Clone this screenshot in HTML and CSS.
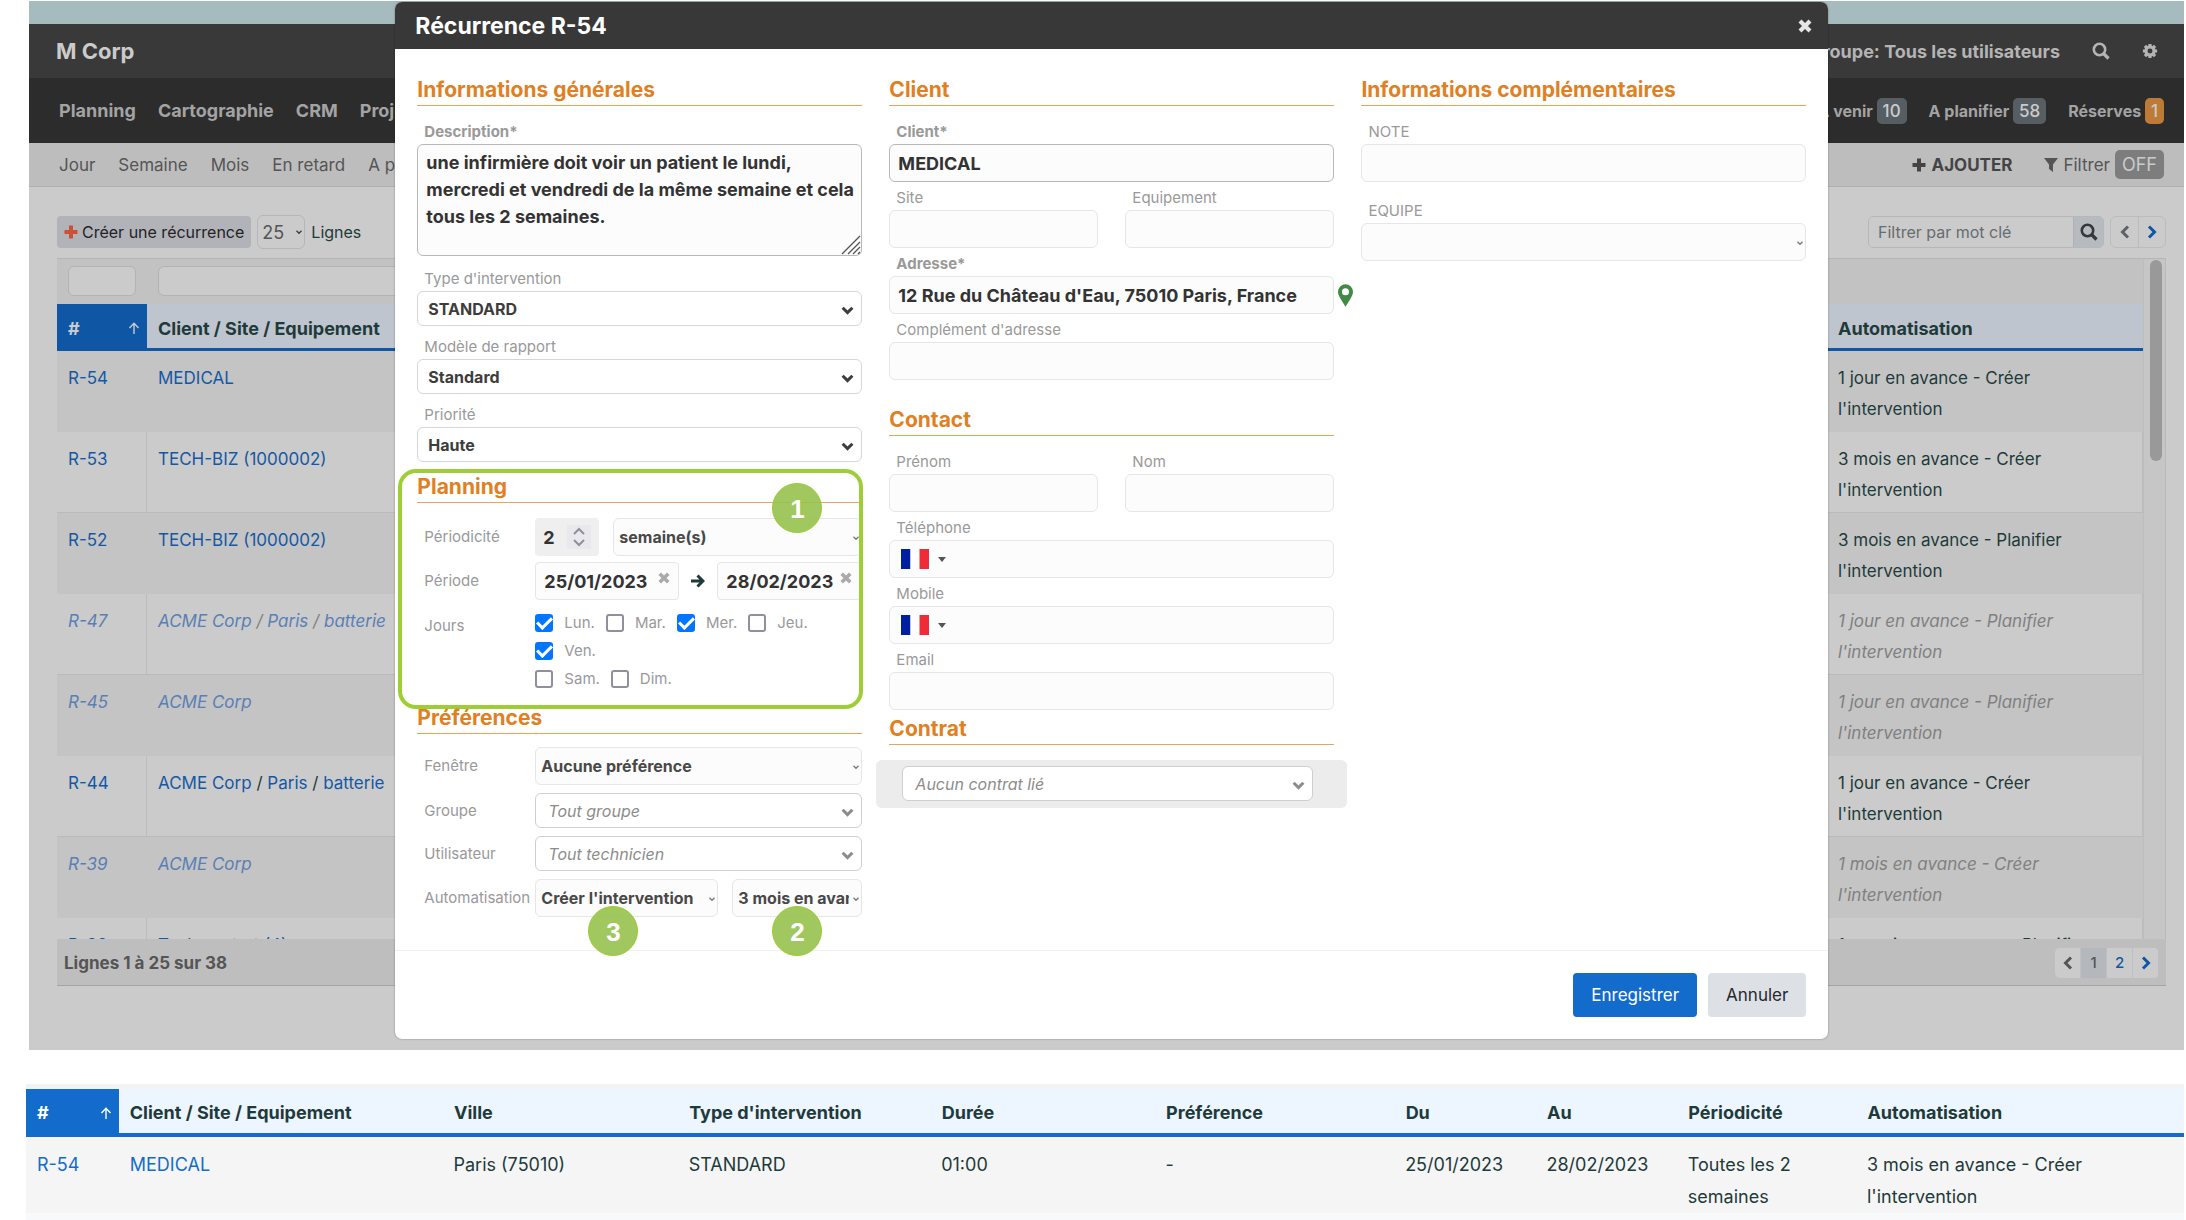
FILE: index.html
```
<!DOCTYPE html>
<html lang="fr">
<head>
    <meta charset="UTF-8">
    <meta name="viewport" content="width=device-width, initial-scale=1.0">
    <title>Récurrence R-54 - M Corp</title>
    <link rel="stylesheet" href="styles.css">
</head>
<body>
    <!-- Icônes communes -->
    <svg class="sprite" aria-hidden="true">
        <symbol id="chevron" viewBox="0 0 12 12"><path d="M1.5 3.5L6 8l4.500-4.500" fill="none" stroke="currentColor" stroke-width="2.800"/></symbol>
        <symbol id="chevron-small" viewBox="0 0 12 12"><path d="M3 4.500L6 7.500l3-3" fill="none" stroke="currentColor" stroke-width="1.600"/></symbol>
        <symbol id="left" viewBox="0 0 14 14"><path d="M10 1.500L4.500 7l5.500 5.500" fill="none" stroke="currentColor" stroke-width="3"/></symbol>
        <symbol id="right" viewBox="0 0 14 14"><path d="M4 1.500L9.500 7 4 12.500" fill="none" stroke="currentColor" stroke-width="3"/></symbol>
        <symbol id="cross" viewBox="0 0 14 14"><path d="M2 2l10 10M12 2L2 12" fill="none" stroke="currentColor" stroke-width="4.200"/></symbol>
        <symbol id="plus" viewBox="0 0 14 14"><path d="M7 .5v13M.5 7h13" fill="none" stroke="currentColor" stroke-width="4"/></symbol>
        <symbol id="search" viewBox="0 0 18 18"><circle cx="7.500" cy="7.500" r="5.700" fill="none" stroke="currentColor" stroke-width="2.600"/><path d="M11.500 11.500l5 5" stroke="currentColor" stroke-width="3.200"/></symbol>
        <symbol id="gear" viewBox="0 0 18 18"><circle cx="9" cy="9" r="4.600" fill="none" stroke="currentColor" stroke-width="3.600"/><path d="M9 1v3M9 14v3M1 9h3M14 9h3M3.300 3.300l2.200 2.200M12.500 12.500l2.200 2.200M14.700 3.300l-2.200 2.200M5.500 12.500l-2.200 2.200" stroke="currentColor" stroke-width="3.600"/></symbol>
        <symbol id="filter" viewBox="0 0 14 14"><path d="M0 0h14L9 6.500V14l-4-3V6.500z" fill="currentColor"/></symbol>
        <symbol id="up" viewBox="0 0 12 12"><path d="M6 12V1.500M1.500 6L6 1.300 10.500 6" fill="none" stroke="currentColor" stroke-width="1.400"/></symbol>
        <symbol id="arrow" viewBox="0 0 14 14"><path d="M0 7h11M6.500 1.500L12 7l-5.500 5.500" fill="none" stroke="currentColor" stroke-width="3"/></symbol>
        <symbol id="pin" viewBox="0 0 16 24"><path d="M8 0a8 8 0 0 0-8 8c0 3 1.500 5 3 8l5 8 5-8c1.500-3 3-5 3-8a8 8 0 0 0-8-8zm0 4.200a3.800 3.800 0 1 1 0 7.600 3.800 3.800 0 0 1 0-7.600z" fill="currentColor" fill-rule="evenodd"/></symbol>
        <symbol id="flag" viewBox="0 0 28 20"><path d="M0 0h9.500v20H0z" fill="#00209f"/><path d="M9.500 0h9v20h-9z" fill="#fff"/><path d="M18.500 0H28v20h-9.500z" fill="#ef2b36"/></symbol>
    </svg>

    <div class="app">
        <div class="strip"></div>
        <header class="topbar">
            <strong class="brand">M Corp</strong>
            <div class="topbar-right">
                <strong>Groupe: Tous les utilisateurs</strong>
                <button type="button" aria-label="Rechercher"><svg class="icon-18"><use href="#search"/></svg></button>
                <button type="button" aria-label="Paramètres"><svg class="icon-16"><use href="#gear"/></svg></button>
            </div>
        </header>
        <nav class="mainnav">
            <div class="links">
                <a href="#">Planning</a>
                <a href="#">Cartographie</a>
                <a href="#">CRM</a>
                <a href="#">Projets</a>
            </div>
            <div class="links counters">
                <a href="#">A venir <span class="count">10</span></a>
                <a href="#">A planifier <span class="count">58</span></a>
                <a href="#">Réserves <span class="count count-orange">1</span></a>
            </div>
        </nav>
        <nav class="subnav">
            <div class="links">
                <a href="#">Jour</a>
                <a href="#">Semaine</a>
                <a href="#">Mois</a>
                <a href="#">En retard</a>
                <a href="#">A planifier</a>
            </div>
            <div class="subnav-right">
                <button type="button" class="add"><svg class="icon-14"><use href="#plus"/></svg>AJOUTER</button>
                <button type="button" class="filter"><svg class="icon-14"><use href="#filter"/></svg>Filtrer <span class="off">OFF</span></button>
            </div>
        </nav>

        <main class="content">
            <div class="toolbar">
                <button type="button" class="create"><svg class="icon-14"><use href="#plus"/></svg>Créer une récurrence</button>
                <span class="select lines-select">
                    <select id="lines"><option>25</option></select>
                    <svg><use href="#chevron-small"/></svg>
                </span>
                <label class="lines-label" for="lines">Lignes</label>
                <div class="search">
                    <input type="text" placeholder="Filtrer par mot clé" aria-label="Filtrer par mot clé">
                    <button type="button" aria-label="Filtrer"><svg class="icon-18"><use href="#search"/></svg></button>
                </div>
                <div class="pager">
                    <button type="button" aria-label="Précédent"><svg class="icon-14"><use href="#left"/></svg></button>
                    <button type="button" class="blue" aria-label="Suivant"><svg class="icon-14"><use href="#right"/></svg></button>
                </div>
            </div>

            <div class="grid-box">
                <table class="grid">
                    <colgroup><col class="g-num"><col class="g-client"><col><col class="g-auto"></colgroup>
                    <thead>
                        <tr class="filters">
                            <td><input type="text" aria-label="Filtrer par numéro"></td>
                            <td colspan="2"><input type="text" aria-label="Filtrer par client"></td>
                            <td></td>
                        </tr>
                        <tr>
                            <th class="sorted"><span class="sort"># <svg class="icon-12"><use href="#up"/></svg></span></th>
                            <th>Client / Site / Equipement</th>
                            <th></th>
                            <th>Automatisation</th>
                        </tr>
                    </thead>
                    <tbody>
                        <tr><td><a href="#">R-54</a></td><td><a href="#">MEDICAL</a></td><td></td><td>1 jour en avance - Créer<br>l'intervention</td></tr>
                        <tr><td><a href="#">R-53</a></td><td><a href="#">TECH-BIZ (1000002)</a></td><td></td><td>3 mois en avance - Créer<br>l'intervention</td></tr>
                        <tr><td><a href="#">R-52</a></td><td><a href="#">TECH-BIZ (1000002)</a></td><td></td><td>3 mois en avance - Planifier<br>l'intervention</td></tr>
                        <tr class="inactive"><td><a href="#">R-47</a></td><td><a href="#">ACME Corp</a> / <a href="#">Paris</a> / <a href="#">batterie</a></td><td></td><td>1 jour en avance - Planifier<br>l'intervention</td></tr>
                        <tr class="inactive"><td><a href="#">R-45</a></td><td><a href="#">ACME Corp</a></td><td></td><td>1 jour en avance - Planifier<br>l'intervention</td></tr>
                        <tr><td><a href="#">R-44</a></td><td><a href="#">ACME Corp</a> / <a href="#">Paris</a> / <a href="#">batterie</a></td><td></td><td>1 jour en avance - Créer<br>l'intervention</td></tr>
                        <tr class="inactive"><td><a href="#">R-39</a></td><td><a href="#">ACME Corp</a></td><td></td><td>1 mois en avance - Créer<br>l'intervention</td></tr>
                        <tr><td><a href="#">R-38</a></td><td><a href="#">Tech contrat (4)</a></td><td></td><td>1 semaine en avance - Planifier<br>l'intervention</td></tr>
                    </tbody>
                </table>
                <div class="track"><div class="thumb"></div></div>
            </div>
            <div class="grid-footer">
                <strong>Lignes 1 à 25 sur 38</strong>
                <div class="pages">
                    <button type="button" aria-label="Page précédente"><svg class="icon-14"><use href="#left"/></svg></button>
                    <button type="button" class="current">1</button>
                    <button type="button" class="blue">2</button>
                    <button type="button" class="blue" aria-label="Page suivante"><svg class="icon-14"><use href="#right"/></svg></button>
                </div>
            </div>
        </main>

        <!-- Fenêtre de la récurrence -->
        <form class="modal" role="dialog" aria-labelledby="modal-title">
            <div class="modal-header">
                <h1 id="modal-title">Récurrence R-54</h1>
                <button type="button" aria-label="Fermer"><svg class="icon-14"><use href="#cross"/></svg></button>
            </div>
            <div class="modal-body">
                <div class="column">
                    <h2>Informations générales</h2>
                    <div class="field">
                        <label class="required" for="description">Description*</label>
                        <div class="area">
                            <textarea id="description">une infirmière doit voir un patient le lundi, mercredi et vendredi de la même semaine et cela tous les 2 semaines.</textarea>
                            <svg class="grip" viewBox="0 0 20 20" aria-hidden="true"><path d="M1 19L19 1M7 19L19 7M12 19l7-7M17 19l2-2" stroke="#555" stroke-width="1.300"/></svg>
                        </div>
                    </div>
                    <div class="field field-select">
                        <label for="type">Type d'intervention</label>
                        <span class="select"><select id="type"><option>STANDARD</option></select><svg><use href="#chevron"/></svg></span>
                    </div>
                    <div class="field field-select">
                        <label for="report">Modèle de rapport</label>
                        <span class="select"><select id="report"><option>Standard</option></select><svg><use href="#chevron"/></svg></span>
                    </div>
                    <div class="field field-select">
                        <label for="priority">Priorité</label>
                        <span class="select"><select id="priority"><option>Haute</option></select><svg><use href="#chevron"/></svg></span>
                    </div>

                    <section class="planning">
                        <h2>Planning</h2>
                        <div class="row">
                            <label for="period">Périodicité</label>
                            <div class="controls">
                                <span class="number">
                                    <input type="text" inputmode="numeric" id="period" value="2">
                                    <span class="spin"><svg viewBox="0 0 24 24" aria-hidden="true"><path d="M7 9l5-5 5 5M7 15l5 5 5-5" fill="none" stroke="#8f8f9d" stroke-width="2"/></svg></span>
                                </span>
                                <span class="select soft grow"><select aria-label="Unité de périodicité"><option>semaine(s)</option></select><svg><use href="#chevron-small"/></svg></span>
                            </div>
                        </div>
                        <div class="row">
                            <label for="start">Période</label>
                            <div class="controls dates">
                                <span class="date"><input type="text" id="start" value="25/01/2023"><button type="button" aria-label="Effacer le début"><svg class="icon-12"><use href="#cross"/></svg></button></span>
                                <svg class="icon-14 to"><use href="#arrow"/></svg>
                                <span class="date"><input type="text" aria-label="Fin" value="28/02/2023"><button type="button" aria-label="Effacer la fin"><svg class="icon-12"><use href="#cross"/></svg></button></span>
                            </div>
                        </div>
                        <div class="row days">
                            <span class="row-title">Jours</span>
                            <div>
                                <div class="checks">
                                    <label><input type="checkbox" checked>Lun.</label>
                                    <label><input type="checkbox">Mar.</label>
                                    <label><input type="checkbox" checked>Mer.</label>
                                    <label><input type="checkbox">Jeu.</label>
                                    <label><input type="checkbox" checked>Ven.</label>
                                </div>
                                <div class="checks">
                                    <label><input type="checkbox">Sam.</label>
                                    <label><input type="checkbox">Dim.</label>
                                </div>
                            </div>
                        </div>
                        <div class="highlight"></div>
                        <span class="step step-1">1</span>
                    </section>

                    <section class="prefs">
                        <h2>Préférences</h2>
                        <div class="row">
                            <label for="window">Fenêtre</label>
                            <span class="select soft"><select id="window"><option>Aucune préférence</option></select><svg><use href="#chevron-small"/></svg></span>
                        </div>
                        <div class="row">
                            <label for="group">Groupe</label>
                            <span class="select empty"><select id="group"><option>Tout groupe</option></select><svg><use href="#chevron"/></svg></span>
                        </div>
                        <div class="row">
                            <label for="user">Utilisateur</label>
                            <span class="select empty"><select id="user"><option>Tout technicien</option></select><svg><use href="#chevron"/></svg></span>
                        </div>
                        <div class="row">
                            <label for="auto">Automatisation</label>
                            <div class="controls auto">
                                <span class="select soft"><select id="auto"><option>Créer l'intervention</option></select><svg><use href="#chevron-small"/></svg></span>
                                <span class="select soft"><select aria-label="Délai"><option>3 mois en avance</option></select><svg><use href="#chevron-small"/></svg></span>
                            </div>
                        </div>
                        <span class="step step-2">2</span>
                        <span class="step step-3">3</span>
                    </section>
                </div>

                <div class="column">
                    <h2>Client</h2>
                    <div class="field">
                        <label class="required" for="client">Client*</label>
                        <input type="text" class="strong" id="client" value="MEDICAL">
                    </div>
                    <div class="pair">
                        <div class="field">
                            <label for="site">Site</label>
                            <input type="text" id="site">
                        </div>
                        <div class="field">
                            <label for="equipment">Equipement</label>
                            <input type="text" id="equipment">
                        </div>
                    </div>
                    <div class="field address">
                        <label class="required" for="address">Adresse*</label>
                        <input type="text" id="address" value="12 Rue du Château d'Eau, 75010 Paris, France">
                        <svg class="pin"><use href="#pin"/></svg>
                    </div>
                    <div class="field">
                        <label for="address2">Complément d'adresse</label>
                        <input type="text" id="address2">
                    </div>

                    <section class="contact">
                        <h2>Contact</h2>
                        <div class="pair">
                            <div class="field">
                                <label for="firstname">Prénom</label>
                                <input type="text" id="firstname">
                            </div>
                            <div class="field">
                                <label for="lastname">Nom</label>
                                <input type="text" id="lastname">
                            </div>
                        </div>
                        <div class="field">
                            <label for="phone">Téléphone</label>
                            <div class="phone"><svg class="flag"><use href="#flag"/></svg><i></i><input type="tel" id="phone"></div>
                        </div>
                        <div class="field">
                            <label for="mobile">Mobile</label>
                            <div class="phone"><svg class="flag"><use href="#flag"/></svg><i></i><input type="tel" id="mobile"></div>
                        </div>
                        <div class="field">
                            <label for="email">Email</label>
                            <input type="email" id="email">
                        </div>
                    </section>

                    <section class="contract">
                        <h2>Contrat</h2>
                        <div class="contract-box">
                            <span class="select empty"><select aria-label="Contrat"><option>Aucun contrat lié</option></select><svg><use href="#chevron"/></svg></span>
                        </div>
                    </section>
                </div>

                <div class="column extra">
                    <h2>Informations complémentaires</h2>
                    <div class="field">
                        <label for="note">NOTE</label>
                        <input type="text" id="note">
                    </div>
                    <div class="field">
                        <label for="team">EQUIPE</label>
                        <span class="select soft"><select id="team"><option></option></select><svg><use href="#chevron-small"/></svg></span>
                    </div>
                </div>
            </div>
            <div class="modal-footer">
                <button type="submit" class="save">Enregistrer</button>
                <button type="button" class="cancel">Annuler</button>
            </div>
        </form>
    </div>

    <!-- Résultat dans la liste -->
    <table class="result">
        <colgroup>
            <col class="r-num"><col class="r-client"><col class="r-city"><col class="r-type"><col class="r-time"><col class="r-pref"><col class="r-date"><col class="r-date"><col class="r-period"><col>
        </colgroup>
        <thead>
            <tr>
                <th class="sorted"><span class="sort"># <svg class="icon-12"><use href="#up"/></svg></span></th>
                <th>Client / Site / Equipement</th>
                <th>Ville</th>
                <th>Type d'intervention</th>
                <th>Durée</th>
                <th>Préférence</th>
                <th>Du</th>
                <th>Au</th>
                <th>Périodicité</th>
                <th>Automatisation</th>
            </tr>
        </thead>
        <tbody>
            <tr>
                <td><a href="#">R-54</a></td>
                <td><a href="#">MEDICAL</a></td>
                <td>Paris (75010)</td>
                <td>STANDARD</td>
                <td>01:00</td>
                <td>-</td>
                <td>25/01/2023</td>
                <td>28/02/2023</td>
                <td>Toutes les 2<br>semaines</td>
                <td>3 mois en avance - Créer<br>l'intervention</td>
            </tr>
        </tbody>
    </table>
</body>
</html>
```
FILE: styles.css
```
* {
    box-sizing: border-box;
}
body {
    margin: 0;
    min-height: 100vh;
    padding: 1px 2px 0 26px;
    background-color: #fff;
    font-family: Inter, "Liberation Sans", sans-serif;
    font-size: 17px;
    color: #1e3a3a;
}
h1, h2 {
    margin: 0;
}
button, input, select, textarea {
    margin: 0;
    font: inherit;
    color: inherit;
}
button {
    padding: 0;
    border: none;
    background: none;
    display: flex;
    align-items: center;
    justify-content: center;
    cursor: pointer;
}
a {
    text-decoration: none;
    color: inherit;
}
.sprite {
    display: none;
}
.icon-12 {
    width: 12px;
    height: 12px;
}
.icon-14 {
    width: 14px;
    height: 14px;
}
.icon-16 {
    width: 16px;
    height: 16px;
}
.icon-18 {
    width: 18px;
    height: 18px;
}

/* Application en arrière-plan */
.app {
    position: relative;
    margin-left: 3px;
    background-color: #cbcbcb;
}
.strip {
    height: 23px;
    background-color: #a6bbbe;
}
.topbar, .mainnav, .subnav {
    display: flex;
    align-items: center;
    justify-content: space-between;
    padding: 0 20px 0 30px;
}
.topbar {
    height: 54px;
    padding-left: 27px;
    background-color: #393939;
    color: #cbcbcb;
}
.brand {
    font-size: 22px;
}
.topbar-right {
    display: flex;
    align-items: center;
    gap: 32px;
    padding-right: 6px;
    font-size: 18px;
    color: #b4b4b4;
}
.mainnav {
    height: 65px;
    background-color: #2c2c2c;
    color: #a3a3a3;
    font-size: 18px;
    font-weight: bold;
}
.links {
    display: flex;
    align-items: center;
    gap: 22px;
}
.subnav .links {
    gap: 23px;
}
.counters {
    font-size: 16px;
}
.count {
    display: inline-block;
    padding: 0 6px;
    border-radius: 5px;
    background-color: #565e64;
    color: #cbcbcb;
    font-size: 17px;
    font-weight: 500;
    line-height: 26px;
}
.count-orange {
    background-color: #bd7b35;
}
.subnav {
    height: 44px;
    background-color: #bdbdbd;
    border-bottom: 1px solid #b0b0b0;
    color: #555;
}
.subnav-right {
    display: flex;
    align-items: center;
    gap: 32px;
}
.add {
    gap: 5px;
    font-weight: bold;
    color: #444;
}
.filter {
    gap: 5px;
}
.off {
    padding: 0 7px;
    border-radius: 5px;
    background-color: #7d7d7d;
    color: #cbcbcb;
    font-size: 18px;
    line-height: 29px;
}
.content {
    padding: 28px 18px 64px 28px;
}
.toolbar {
    display: flex;
    align-items: center;
    gap: 6px;
    height: 34px;
    margin-bottom: 9px;
}
.create {
    gap: 4px;
    height: 32px;
    padding: 0 7px;
    border-radius: 4px;
    background-color: #b2b3b8;
    color: #1f2326;
    font-size: 16px;
}
.create svg {
    color: #cb5136;
}
.lines-label {
    font-size: 16px;
}
.select {
    position: relative;
    display: block;
}
.select select {
    appearance: none;
    display: block;
    width: 100%;
    height: 35px;
    padding: 0 30px 0 10px;
    border: 1px solid #d6d6d6;
    border-radius: 6px;
    background-color: #fff;
    color: #3d3d3d;
    font-size: 16px;
    font-weight: bold;
}
.select svg {
    position: absolute;
    right: 8px;
    top: 13px;
    width: 13px;
    height: 13px;
    color: #3d3d3d;
    pointer-events: none;
}
.lines-select select {
    width: 48px;
    height: 34px;
    padding: 0 0 0 4px;
    border-color: #b7b7b7;
    background-color: #cbcbcb;
    color: #555;
    font-size: 18px;
    font-weight: normal;
}
.lines-select svg {
    right: 1px;
    top: 12px;
    width: 10px;
    height: 10px;
}
.search {
    display: flex;
    width: 236px;
    height: 32px;
    margin-left: auto;
    border: 1px solid #b3b8bb;
    border-radius: 5px;
    overflow: hidden;
}
.search input {
    flex: 1;
    min-width: 0;
    padding: 0 9px;
    border: none;
    background-color: #cbcbcb;
    font-size: 16px;
}
.search input::placeholder {
    color: #676c70;
}
.search button {
    width: 30px;
    border-left: 1px solid #adb1b5;
    background-color: #b7bbbf;
    color: #33383c;
}
.pager {
    display: flex;
    border: 1px solid #b9bdc1;
    border-radius: 6px;
}
.pager button {
    width: 27px;
    height: 30px;
    color: #5a6268;
}
.pager button + button {
    border-left: 1px solid #b9bdc1;
}
.pager .blue, .pages .blue {
    color: #0f57a5;
}
.grid-box {
    display: flex;
    height: 681px;
    border-top: 1px solid #b5b5b5;
    border-right: 1px solid #b9b9b9;
    background-color: #c6c6c6;
    overflow: hidden;
}
.grid {
    flex: 1;
    table-layout: fixed;
    border-collapse: separate;
    border-spacing: 0;
    height: fit-content;
}
.g-num {
    width: 90px;
}
.g-client {
    width: 260px;
}
.g-auto {
    width: 316px;
}
.grid td, .grid th {
    text-align: left;
    vertical-align: top;
    line-height: 31px;
    white-space: nowrap;
}
.grid .filters td {
    height: 45px;
    padding: 7px 11px 0;
    line-height: 0;
    background-color: #c2c2c2;
}
.filters input {
    width: 100%;
    height: 30px;
    border: 1px solid #b0b4b4;
    border-radius: 6px;
    background-color: #cbcbcb;
}
.grid th {
    height: 47px;
    padding: 4px 0 0 11px;
    vertical-align: middle;
    background-color: #bfc5ce;
    border-bottom: 3px solid #0f57a5;
    font-size: 18px;
}
.grid .sorted {
    background-color: #0f57a5;
    color: #cbcbcb;
}
.sort {
    display: flex;
    align-items: center;
    justify-content: space-between;
    padding-right: 7px;
}
.grid tbody td {
    height: 81px;
    padding: 12px 0 0 11px;
    background-color: #c4c4c4;
}
.grid tbody tr:nth-child(even) td {
    background-color: #cbcbcb;
    border-right: 1px solid #bcbcbc;
    border-bottom: 1px solid #bababa;
}
.grid tbody a {
    color: #1458a5;
}
.grid .inactive {
    font-style: italic;
    color: #808080;
}
.grid .inactive a {
    color: #5a7fb5;
}
.track {
    width: 22px;
    padding: 1px 0 0 6px;
    border-left: 1px solid #bdbdbd;
}
.thumb {
    width: 12px;
    height: 201px;
    border-radius: 6px;
    background-color: #999;
}
.grid-footer {
    display: flex;
    align-items: center;
    justify-content: space-between;
    height: 47px;
    padding: 1px 7px 0 7px;
    background-color: #bebebe;
    border-bottom: 1px solid #a5a5a5;
    color: #555;
}
.pages {
    display: flex;
    border-radius: 5px;
    background-color: #cbcbcb;
    overflow: hidden;
}
.pages button {
    width: 26px;
    height: 30px;
    border-right: 1px solid #bcc0c4;
    font-size: 15px;
    font-weight: 500;
}
.pages .current {
    background-color: #b4b8bc;
}

/* Fenêtre modale */
.modal {
    position: absolute;
    left: 17%;
    top: 1px;
    width: 66.5%;
    border-radius: 7px;
    background-color: #fff;
    box-shadow: 0 0 2px rgba(0, 0, 0, 0.4);
}
.modal-header {
    display: flex;
    align-items: center;
    justify-content: space-between;
    height: 47px;
    padding: 0 16px 0 20px;
    border-radius: 7px 7px 0 0;
    background-color: #383838;
    color: #fff;
}
.modal-header h1 {
    font-size: 23px;
}
.modal-header button {
    color: #e6e6e6;
}
.modal-body {
    display: grid;
    grid-template-columns: repeat(3, 1fr);
    gap: 27px;
    padding: 25px 22px 33px;
    border-bottom: 1px solid #f0f0f0;
}
.column {
    min-width: 0;
}
h2 {
    margin-bottom: 10px;
    border-bottom: 1px solid #eba35c;
    color: #e0801f;
    font-size: 21px;
    line-height: 31px;
}
.field {
    padding-top: 4px;
}
.field label, .row label, .row-title {
    display: block;
    padding-left: 7px;
    color: #999;
    font-size: 15px;
    line-height: 24px;
}
.field .required {
    font-weight: bold;
}
.field input, .phone {
    display: block;
    width: 100%;
    height: 38px;
    padding: 0 8px;
    border: 1px solid #e6e6e6;
    border-radius: 6px;
    background-color: #fcfcfc;
    color: #333;
    font-size: 18px;
    font-weight: bold;
}
.field input.strong {
    border-color: #b8b8b8;
}
.area {
    position: relative;
    margin-bottom: 2px;
}
.area textarea {
    display: block;
    width: 100%;
    height: 112px;
    padding: 4px 1px 4px 8px;
    border: 1px solid #b8b8b8;
    border-radius: 6px;
    background-color: #fcfcfc;
    color: #333;
    font-size: 18px;
    font-weight: bold;
    line-height: 27px;
    resize: none;
}
.grip {
    position: absolute;
    right: 1px;
    bottom: 1px;
    width: 20px;
    height: 20px;
}
.field-select {
    padding-top: 9px;
}
.planning, .prefs {
    position: relative;
    margin-top: 9px;
}
.planning h2 {
    margin-bottom: 15px;
}
.prefs h2 {
    margin-bottom: 13px;
}
.row {
    display: grid;
    grid-template-columns: 118px 1fr;
    align-items: center;
    margin-bottom: 6px;
}
.prefs .row {
    margin-bottom: 8px;
}
.prefs .row:nth-of-type(4) {
    margin-bottom: 0;
}
.controls {
    display: flex;
    gap: 14px;
    min-width: 0;
}
.grow {
    flex: 1;
}
.soft select {
    height: 38px;
    padding: 0 12px 0 5px;
    border-color: #e6e6e6;
    background-color: #fcfcfc;
    color: #484848;
    font-size: 16px;
}
.soft svg {
    right: 1px;
    top: 15px;
    width: 10px;
    height: 10px;
    color: #777;
}
.empty select {
    padding-left: 12px;
    border-color: #cfcfcf;
    color: #8c8c8c;
    font-style: italic;
    font-weight: normal;
}
.empty svg {
    color: #8c8c8c;
}
.number {
    display: flex;
    align-items: center;
    width: 64px;
    height: 38px;
    padding-left: 8px;
    border-radius: 4px;
    background-color: #efefef;
}
.number input {
    width: 24px;
    padding: 0;
    border: none;
    background: none;
    color: #333;
    font-size: 18px;
    font-weight: bold;
}
.spin {
    width: 24px;
    height: 24px;
    background-color: #e9e9ed;
}
.dates {
    align-items: center;
    gap: 12px;
}
.date {
    display: flex;
    width: 144px;
    height: 38px;
    border: 1px solid #e6e6e6;
    border-radius: 4px;
    background-color: #fcfcfc;
}
.date input {
    width: 122px;
    padding: 0 0 0 8px;
    border: none;
    background: none;
    color: #333;
    font-size: 18px;
    font-weight: bold;
}
.date button {
    height: 30px;
    color: #aaa;
}
.to {
    flex: none;
    color: #1e3a3a;
}
.days {
    align-items: start;
    margin: 9px 0 0;
}
.row-title {
    line-height: 34px;
}
.checks {
    display: flex;
    flex-wrap: wrap;
    column-gap: 11px;
}
.checks label {
    display: flex;
    align-items: center;
    gap: 11px;
    padding: 0;
    line-height: 28px;
}
.checks input {
    appearance: none;
    width: 18px;
    height: 18px;
    border: 2px solid #8f8f9d;
    border-radius: 3px;
    background-color: #fff;
}
.checks input:checked {
    display: grid;
    place-items: center;
    border-color: #0075ff;
    background-color: #0075ff;
}
.checks input:checked::before {
    content: "";
    width: 12px;
    height: 6px;
    border-left: 3px solid #fff;
    border-bottom: 3px solid #fff;
    transform: translateY(-2px) rotate(-45deg);
}
.highlight {
    position: absolute;
    inset: -2px -1px -16px -19px;
    border: 4px solid #9dce36;
    border-radius: 18px;
    pointer-events: none;
}
.step {
    position: absolute;
    width: 50px;
    height: 50px;
    border: 1px solid #9acd32;
    border-radius: 50%;
    background-color: rgba(150, 194, 76, 0.9);
    color: #fff;
    font-family: "Liberation Sans", sans-serif;
    font-size: 26px;
    font-weight: bold;
    line-height: 50px;
    text-align: center;
}
.step-1 {
    right: 40px;
    top: 12px;
}
.step-2 {
    right: 40px;
    bottom: -39px;
}
.step-3 {
    right: 224px;
    bottom: -39px;
}
.auto {
    display: grid;
    grid-template-columns: 183px 1fr;
}
.pair {
    display: grid;
    grid-template-columns: 1fr 1fr;
    gap: 27px;
}
.address {
    position: relative;
}
.pin {
    position: absolute;
    right: -19px;
    bottom: 7px;
    width: 15px;
    height: 23px;
    color: #438a47;
}
.contact {
    margin-top: 24px;
}
.phone {
    display: flex;
    align-items: center;
    padding-left: 11px;
}
.phone input {
    flex: 1;
    height: 30px;
    border: none;
    background: none;
}
.flag {
    width: 28px;
    height: 20px;
    margin-right: 9px;
}
.phone i {
    border: 4px solid transparent;
    border-top: 5px solid #555;
    border-bottom: 0;
}
.contract {
    margin-top: 3px;
}
.contract-box {
    margin: 15px -13px 0;
    padding: 6px 34px 7px 26px;
    border-radius: 6px;
    background-color: #ececec;
}
.extra .field + .field {
    margin-top: 13px;
}
.modal-footer {
    display: flex;
    justify-content: flex-end;
    gap: 11px;
    padding: 22px;
}
.modal-footer button {
    height: 44px;
    padding: 0 18px;
    border-radius: 4px;
}
.save {
    background-color: #136ccb;
    color: #fff;
}
.cancel {
    background-color: #dde1e6;
    color: #24292d;
}

/* Tableau du bas */
.result {
    width: 100%;
    margin-top: 34px;
    table-layout: fixed;
    border-collapse: collapse;
    border-top: 5px solid #f3f3f3;
    border-bottom: 7px solid #f8f9fb;
    font-size: 18px;
}
.r-num { width: 4.3%; }
.r-client { width: 15%; }
.r-city { width: 10.9%; }
.r-type { width: 11.7%; }
.r-time { width: 10.4%; }
.r-pref { width: 11.1%; }
.r-date { width: 6.55%; }
.r-period { width: 8.3%; }
.result th, .result td {
    padding: 12px 0 0 11px;
    text-align: left;
    vertical-align: top;
    line-height: 32px;
    white-space: nowrap;
    background-color: #f5f5f5;
}
.result th {
    height: 48px;
    padding-top: 5px;
    vertical-align: middle;
    background-color: #edf5ff;
    border-bottom: 4px solid #136ccb;
}
.result th + th:not(:last-child) {
    border-right: 1px solid #edf5ff;
}
.result .sorted {
    background-color: #136ccb;
    color: #fff;
}
.result a {
    color: #136ccb;
}
```
